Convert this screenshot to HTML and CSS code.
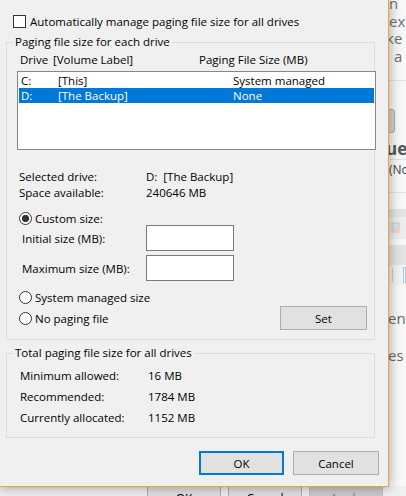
FILE: index.html
```html
<!DOCTYPE html>
<html>
<head>
<meta charset="utf-8">
<link rel="stylesheet" href="styles.css">
</head>
<body>
<div class="desk">
  <div class="bgwin">
    <div class="bgmain">
      <div class="bgtext">
        <div class="o3">n</div>
        <div class="o3">ex</div>
        <div>ke</div>
        <div class="o8">a</div>
      </div>
      <div class="bgrule r1"></div>
      <div class="bgpiece"></div>
      <div class="bghead">ues</div>
      <div class="bgrule"></div>
      <div class="bgnode">(Nod</div>
      <div class="bgrule r2"></div>
      <div class="bgband b1"></div>
      <div class="bgtool">
        <svg width="10" height="14" viewBox="0 0 10 14"><rect x="1" y="2" width="7" height="9" fill="#d9e3ef" stroke="#b7c6d8"/><circle cx="6" cy="9" r="3" fill="#f3d3b8"/></svg>
      </div>
      <div class="bgband b2"></div>
      <div class="bgtool2"><span class="sep"></span><span class="bluebox"></span></div>
      <div class="bgtext2 t1">ent</div>
      <div class="bgtext2 t2">es</div>
    </div>
    <div class="bgbtns">
      <div class="bgbtn">OK</div>
      <div class="bgbtn">Cancel</div>
      <div class="bgbtn dis">Apply</div>
    </div>
  </div>

  <div class="dialog">
    <div class="autorow">
      <span class="chk"></span>
      <span>Automatically manage paging file size for all drives</span>
    </div>

    <div class="group g1">
      <div class="legend">Paging file size for each drive</div>
      <div class="hdr">
        <span class="h1">Drive</span>
        <span class="h2">[Volume Label]</span>
        <span>Paging File Size (MB)</span>
      </div>
      <div class="list">
        <div class="row">
          <span class="c1">C:</span><span class="c2">[This]</span><span>System managed</span>
        </div>
        <div class="row sel">
          <span class="c1">D:</span><span class="c2">[The Backup]</span><span>None</span>
        </div>
      </div>
      <div class="info">
        <div class="kv"><span class="k">Selected drive:</span><span>D:&nbsp; [The Backup]</span></div>
        <div class="kv"><span class="k">Space available:</span><span>240646 MB</span></div>
      </div>
      <div class="rrow r-custom">
        <span class="radio on"></span><span>Custom size:</span>
      </div>
      <div class="frow">
        <span class="fl">Initial size (MB):</span><span class="inp"></span>
      </div>
      <div class="frow f2">
        <span class="fl">Maximum size (MB):</span><span class="inp"></span>
      </div>
      <div class="rrow r-sys">
        <span class="radio"></span><span>System managed size</span>
      </div>
      <div class="lastrow">
        <span class="radio"></span><span class="rlabel">No paging file</span>
        <span class="btn set">Set</span>
      </div>
    </div>

    <div class="group g2">
      <div class="legend">Total paging file size for all drives</div>
      <div class="tot">
        <div class="trow"><span class="tk">Minimum allowed:</span><span>16 MB</span></div>
        <div class="trow"><span class="tk">Recommended:</span><span>1784 MB</span></div>
        <div class="trow"><span class="tk">Currently allocated:</span><span>1152 MB</span></div>
      </div>
    </div>

    <div class="btns">
      <span class="btn ok">OK</span>
      <span class="btn cancel">Cancel</span>
    </div>
  </div>
</div>
</body>
</html>
```
FILE: styles.css
```css
* { box-sizing: border-box; }
html, body { margin: 0; padding: 0; }
body {
  width: 406px;
  height: 496px;
  overflow: hidden;
  font-family: "Open Sans", "Noto Sans", sans-serif;
  font-size: 11.5px;
  color: #000;
}
.desk {
  position: relative;
  width: 406px;
  height: 496px;
  overflow: hidden;
  background: #f4f4f4;
}

/* background window */
.bgwin {
  position: absolute;
  left: 0;
  top: 0;
  width: 406px;
  height: 496px;
  display: flex;
  flex-direction: column;
  background: #f8f8f8;
  white-space: nowrap;
  overflow: hidden;
}
.bgmain {
  flex: 1;
  display: flex;
  flex-direction: column;
  padding-left: 386px;
}
.bgtext {
  margin-top: -5px;
  font-size: 15px;
  line-height: 17.5px;
  color: #707070;
}
.o3 { padding-left: 3px; }
.o8 { padding-left: 8px; }
.bgrule { height: 1px; background: #e2e2e2; }
.bgrule.r1 { margin-top: 15px; }
.bgrule.r2 { margin-top: 14px; }
.bgpiece {
  margin-top: 28px;
  width: 9px;
  height: 24px;
  border: 1px solid #acacac;
  border-radius: 0 3px 3px 0;
  background: #d6d6d6;
}
.bghead {
  margin-top: 5px;
  font-size: 17px;
  font-weight: bold;
  line-height: 21px;
  color: #555;
}
.bgnode {
  margin-top: 2px;
  padding-left: 3px;
  font-size: 12px;
  line-height: 16px;
  color: #444;
}
.bgband { background: #e4e4e4; }
.bgband.b1 { margin-top: 16px; height: 8px; }
.bgband.b2 { margin-top: 6px; height: 20px; }
.bgtool {
  height: 22px;
  padding: 4px 0 0 5px;
  background: #eeeeee;
}
.bgtool svg { display: block; opacity: 0.8; }
.bgtool2 {
  height: 20px;
  display: flex;
  align-items: center;
  padding-left: 6px;
  gap: 11px;
  background: #f3f3f3;
}
.sep { width: 1px; height: 14px; background: #cfcfcf; }
.bluebox { width: 8px; height: 16px; border: 1px solid #a9c6e6; background: #fff; }
.bgtext2 {
  padding-left: 2px;
  font-size: 15px;
  line-height: 18px;
  color: #6a6a6a;
}
.bgtext2.t1 { margin-top: 24px; }
.bgtext2.t2 { margin-top: 19px; }
.bgbtns {
  height: 10px;
  display: flex;
  gap: 7px;
  padding-left: 147px;
  background: #f0f0f0;
}
.bgbtn {
  flex: none;
  width: 74px;
  height: 23px;
  border: 1px solid #adadad;
  background: #e1e1e1;
  text-align: center;
  font-size: 12px;
  line-height: 16px;
  padding-top: 4px;
}
.bgbtn.dis {
  background: #cccccc;
  border-color: #bfbfbf;
  color: #838383;
}

/* dialog */
.dialog {
  position: absolute;
  left: 0;
  top: 0;
  width: 389px;
  height: 487px;
  background: #f0f0f0;
  border-right: 1px solid #eba044;
  border-bottom: 1px solid #eba044;
  box-shadow: 0 0 12px rgba(0, 0, 0, 0.38);
  display: flex;
  flex-direction: column;
  white-space: nowrap;
}
.autorow {
  display: flex;
  align-items: center;
  gap: 4px;
  height: 13px;
  margin: 15px 0 0 13px;
}
.chk {
  flex: none;
  width: 13px;
  height: 13px;
  border: 1px solid #333;
  background: #fff;
}
.group {
  margin-left: 6px;
  width: 369px;
  border: 1px solid #dcdcdc;
}
.g1 { margin-top: 14px; padding-bottom: 9px; }
.g2 { margin-top: 13px; padding-bottom: 9px; }
.legend {
  width: max-content;
  margin: -9px 0 0 6px;
  padding: 0 2px;
  background: #f0f0f0;
  line-height: 16px;
}
.hdr {
  display: flex;
  height: 16px;
  line-height: 16px;
  margin-top: 2px;
  padding-left: 13px;
}
.h1 { width: 33px; }
.h2 { width: 146px; }
.list {
  margin: 3px 0 0 10px;
  width: 359px;
  height: 79px;
  border: 1px solid #828790;
  background: #fff;
  padding: 1px;
}
.row {
  display: flex;
  height: 15px;
  line-height: 15px;
  padding-left: 2px;
}
.row.sel { background: #0078d7; color: #fff; }
.c1 { width: 37px; }
.c2 { width: 175px; }
.info { margin-top: 19px; padding-left: 12px; }
.kv { display: flex; height: 16px; line-height: 16px; }
.k { width: 127px; }
.rrow {
  display: flex;
  align-items: center;
  gap: 3px;
  height: 14px;
  padding-left: 12px;
}
.r-custom { margin-top: 10px; }
.r-sys { margin-top: 9px; }
.radio {
  flex: none;
  width: 13px;
  height: 13px;
  border-radius: 50%;
  border: 1px solid #333;
  background: #fff;
}
.radio.on {
  background: radial-gradient(circle at center, #333 0, #333 3.3px, #fff 4px);
}
.frow {
  display: flex;
  align-items: center;
  height: 26px;
  padding-left: 15px;
}
.f2 { margin-top: 4px; }
.fl { width: 124px; }
.inp {
  width: 88px;
  height: 26px;
  border: 1px solid #7a7a7a;
  background: #fff;
}
.lastrow {
  display: flex;
  align-items: center;
  gap: 3px;
  height: 24px;
  margin-top: 2px;
  padding: 0 7px 0 12px;
}
.btn {
  display: flex;
  align-items: center;
  justify-content: center;
  height: 24px;
  border: 1px solid #adadad;
  background: #e1e1e1;
}
.set { margin-left: auto; width: 87px; }
.tot { padding-top: 4px; }
.trow { display: flex; height: 21px; line-height: 21px; padding-left: 13px; }
.tk { width: 128px; }
.btns {
  display: flex;
  justify-content: flex-end;
  gap: 9px;
  margin-top: 13px;
  padding-right: 9px;
}
.ok { width: 85px; border: 2px solid #0078d7; }
.cancel { width: 86px; }
```
